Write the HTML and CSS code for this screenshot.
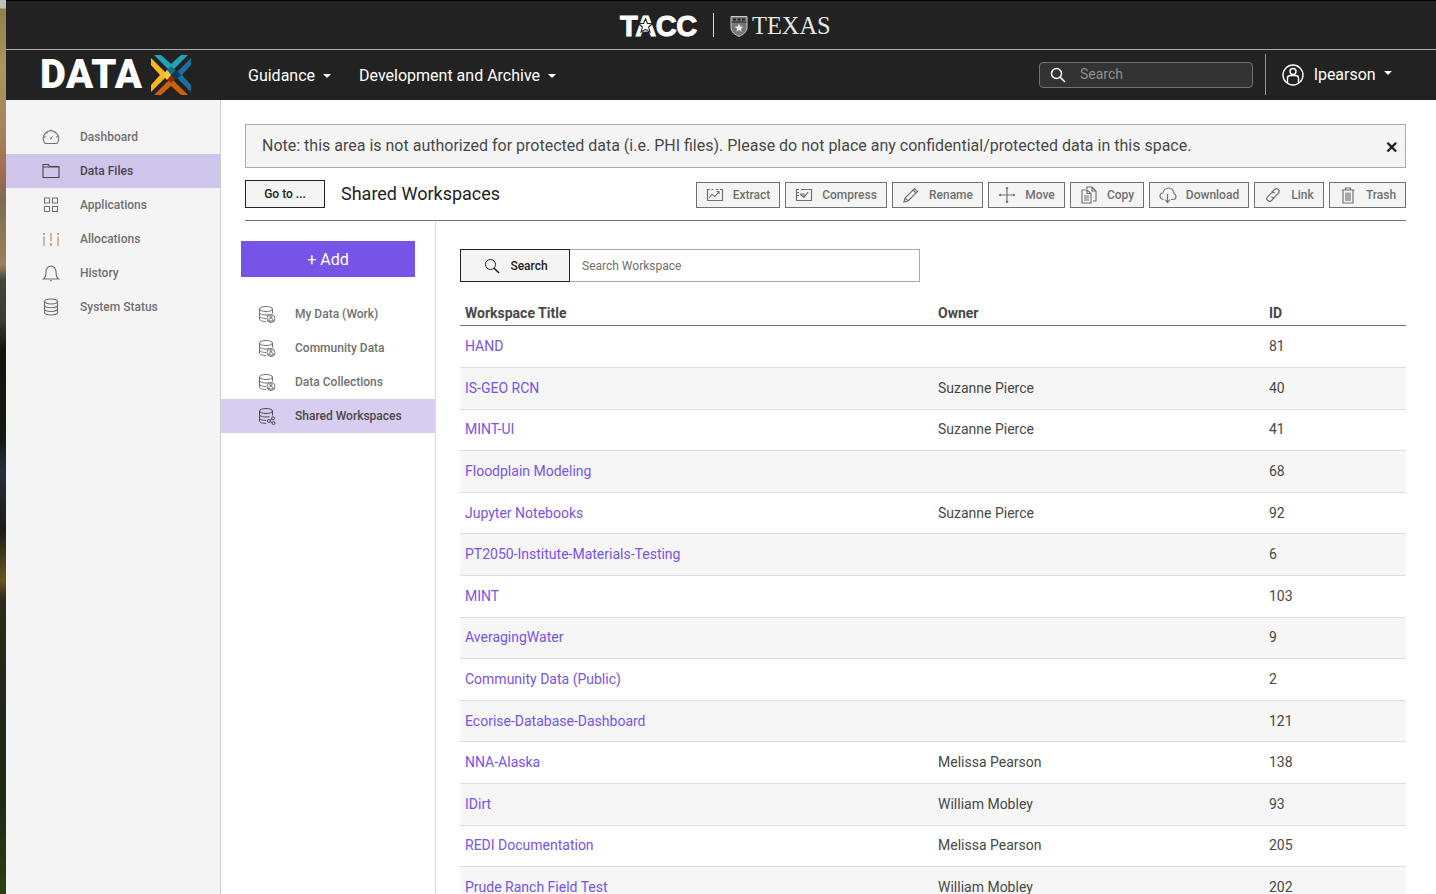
FILE: index.html
```html
<!DOCTYPE html>
<html lang="en">
<head>
    <meta charset="UTF-8">
    <title>Data Files</title>
    <link rel="stylesheet" href="styles.css">
</head>
<body>
    <svg class="sprite" width="0" height="0">
        <symbol id="i-db-user" viewBox="0 0 18 18">
            <path d="M14.500 4v4.500M1.500 4v10c0 1.400 2.900 2.500 6.500 2.500M1.500 7.500C1.500 8.900 4.400 10 8 10c1.200 0 2.500-.1 3.500-.4M1.500 11c0 1.400 2.900 2.500 6.500 2.500"/>
            <ellipse cx="8" cy="4" rx="6.500" ry="2.500"/>
            <circle cx="13" cy="13.500" r="4"/>
            <circle class="fill" cx="13" cy="11.700" r="1.100"/>
            <path class="fill" d="M10.800 16c0-2 1-2.800 2.200-2.800s2.200.8 2.200 2.800z"/>
        </symbol>
        <symbol id="i-db-share" viewBox="0 0 18 18">
            <path d="M14.500 4v4.500M1.500 4v10c0 1.400 2.900 2.500 6.500 2.500M1.500 7.500C1.500 8.900 4.400 10 8 10c1.200 0 2.500-.1 3.500-.4M1.500 11c0 1.400 2.900 2.500 6.500 2.500"/>
            <ellipse cx="8" cy="4" rx="6.500" ry="2.500"/>
            <circle cx="10.800" cy="14" r="1.500"/>
            <circle cx="15" cy="11.300" r="1.500"/>
            <circle cx="15.500" cy="16" r="1.500"/>
            <path d="M12 13.200l1.800-1.200M12.200 14.600l2 .9"/>
        </symbol>
        <symbol id="i-search" viewBox="0 0 16 16">
            <circle cx="6.500" cy="6.500" r="5"/>
            <path d="M10.200 10.200l4.800 4.800" stroke-width="1.600"/>
        </symbol>
    </svg>

    <div class="desktop-strip"></div>

    <div class="app">
        <div class="brand-bar">
            <span class="tacc-logo">T<span class="tacc-a">A<svg class="tacc-star" viewBox="0 0 20 20"><path d="M10 1l2.600 6.200 6.700.5-5.100 4.400 1.600 6.500L10 15.100l-5.800 3.500 1.600-6.500L.7 7.700l6.700-.5z"/></svg></span>CC</span>
            <span class="brand-divider"></span>
            <svg class="ut-shield" viewBox="0 0 18 22">
                <path d="M1 1h16v11c0 4.500-4 7-8 9-4-2-8-4.500-8-9z" fill="#777" stroke="#ccc"/>
                <path d="M1.500 6.500h15" stroke="#222" stroke-width="1"/>
                <path d="M3 3h3v2H3zM7.500 3h3v2h-3zM12 3h3v2h-3z" fill="#222"/>
                <path d="M9 8l1.200 3 3.100.2-2.400 2 .8 3.100L9 14.600l-2.700 1.700.8-3.100-2.400-2 3.100-.2z" fill="#eee"/>
            </svg>
            <span class="texas-logo">TEXAS</span>
        </div>

        <nav class="main-nav">
            <a class="data-logo">
                <span class="data-word">DATA</span>
                <svg class="data-x" viewBox="0 0 40 40">
                    <polygon points="3,0 10,0 20,9 30,0 37,0 20,17" fill="#22a3b5"/>
                    <polygon points="0,3 17,20 0,37 0,30 9,20 0,10" fill="#f7b71d"/>
                    <polygon points="3,40 20,23 37,40 30,40 20,31 10,40" fill="#c9600a"/>
                    <polygon points="40,3 40,10 31,20 40,30 40,37 23,20" fill="#1b6f98"/>
                    <polygon points="20,11 25,16 20,21 15,16" fill="#14707f"/>
                    <polygon points="25,15 30,20 25,25 20,20" fill="#0d3a60"/>
                    <polygon points="20,20 24,24 20,28 16,24" fill="#8e2a08"/>
                    <polygon points="16,15 20,20 16,25 12,20" fill="#fbc842"/>
                </svg>
            </a>
            <a class="nav-link caret">Guidance</a>
            <a class="nav-link caret">Development and Archive</a>
            <div class="nav-right">
                <label class="nav-search">
                    <svg class="icon nav-search-icon"><use href="#i-search"/></svg>
                    <span class="nav-search-text">Search</span>
                </label>
                <div class="nav-user caret">
                    <svg class="user-icon" viewBox="0 0 22 22">
                        <circle cx="11" cy="11" r="10"/>
                        <circle cx="11" cy="7.500" r="3"/>
                        <path d="M5.500 18.500V14c0-1.500 1.500-2.500 3-2.500h5c1.500 0 3 1 3 2.500v4.500"/>
                    </svg>
                    <span class="user-name">lpearson</span>
                </div>
            </div>
        </nav>

        <div class="content-wrap">
            <aside class="sidebar">
                <a class="side-item">
                    <svg class="icon side-icon" viewBox="0 0 18 18"><path d="M3 15.500A7.800 7.800 0 1 1 15 15.500zM9 1.500v2M2 9h2M14 9h2M4 4l1.400 1.400M14 4l-1.400 1.400"/><path d="M7.500 10.500l4-3-2.500 4z" class="fill"/></svg>
                    Dashboard
                </a>
                <a class="side-item active">
                    <svg class="icon side-icon" viewBox="0 0 18 18"><path d="M1 15.500V2.500h5.500l1 2H17v11zM1 5h16"/></svg>
                    Data Files
                </a>
                <a class="side-item">
                    <svg class="icon side-icon" viewBox="0 0 18 18"><path d="M2.500 2h5v5h-5zM10.500 2h5v5h-5zM2.500 10.500h5v5h-5zM10.500 10.500h5v5h-5z"/></svg>
                    Applications
                </a>
                <a class="side-item">
                    <svg class="icon side-icon" viewBox="0 0 18 18"><path d="M2 6.500V16" stroke="#b8814f"/><path d="M2 3v2"/><path d="M9 3v8" stroke="#b8814f"/><path d="M9 13v3"/><path d="M16 6.500V16" stroke="#b8814f"/><path d="M16 3v2"/></svg>
                    Allocations
                </a>
                <a class="side-item">
                    <svg class="icon side-icon" viewBox="0 0 18 18"><path d="M1.500 15c2-1.500 2.500-3.500 2.500-7 0-3 2-6 5-6s5 3 5 6c0 3.500.5 5.500 2.500 7zM8 16.800h2"/></svg>
                    History
                </a>
                <a class="side-item">
                    <svg class="icon side-icon" viewBox="0 0 18 18"><ellipse cx="9" cy="3.500" rx="6.500" ry="2.500"/><path d="M2.500 3.500v11c0 1.400 2.900 2.500 6.500 2.500s6.500-1.100 6.500-2.500v-11M2.500 7.200c0 1.400 2.900 2.500 6.500 2.500s6.500-1.100 6.500-2.500M2.500 11c0 1.400 2.900 2.500 6.500 2.500s6.500-1.100 6.500-2.500"/></svg>
                    System Status
                </a>
            </aside>

            <main class="main">
                <div class="note">
                    <span>Note: this area is not authorized for protected data (i.e. PHI files). Please do not place any confidential/protected data in this space.</span>
                    <span class="note-close">&#x2715;</span>
                </div>

                <div class="toolbar">
                    <button class="goto-btn">Go to ...</button>
                    <h1 class="page-title">Shared Workspaces</h1>
                    <div class="actions">
                        <button class="action-btn w-extract">
                            <svg class="icon" viewBox="0 0 18 18"><path d="M4 3.500H1.500v11h15v-11H14M5.500 3.500h2M10 3.500h2.500M1.500 7v1M3 12l3-3.500 3 2 4-5M10.500 5.500H13V8"/></svg>
                            Extract
                        </button>
                        <button class="action-btn w-compress">
                            <svg class="icon" viewBox="0 0 18 18"><path d="M4 3.500H1.500v11h15v-11H6M1.500 6.500H4M1.500 9.500H4M5 8l4 3.500L13 6M5.500 8H9M9 11.500V8"/></svg>
                            Compress
                        </button>
                        <button class="action-btn w-rename">
                            <svg class="icon" viewBox="0 0 18 18"><path d="M2 16l1-4L12.500 2.500l3 3L6 15zM3 12l3 3M11 4l3 3"/></svg>
                            Rename
                        </button>
                        <button class="action-btn w-move">
                            <svg class="icon" viewBox="0 0 18 18"><path d="M9 1v16M1 9h16"/><path class="fill" d="M9 .5l1.500 2.500h-3zM9 17.500L7.500 15h3zM.5 9L3 7.500v3zM17.500 9L15 10.500v-3z"/></svg>
                            Move
                        </button>
                        <button class="action-btn w-copy">
                            <svg class="icon" viewBox="0 0 18 18"><path d="M7 3V1h5l4 4v10h-3M12 1v4h4M2 4h5l4 3.500V17H2zM7 4v3.500h4M4 10h5M4 12h5M4 14h5"/></svg>
                            Copy
                        </button>
                        <button class="action-btn w-download">
                            <svg class="icon" viewBox="0 0 18 18"><path d="M4.500 13.500C2.500 13 1 11.500 1 10c0-1.800 1.300-3 3-3 .5-3 3-5 5.500-5 3 0 5.500 2.500 5.500 5.500 1.200.5 2 1.500 2 3 0 2-1.500 3-3.500 3H12M8.500 8v8M6 13.500l2.500 3 2.500-3"/></svg>
                            Download
                        </button>
                        <button class="action-btn w-link">
                            <svg class="icon" viewBox="0 0 18 18"><path d="M7.500 6.500l3-3c1-1 2.800-1 3.800 0s1 2.800 0 3.800l-3.500 3.500c-1 1-2.600 1-3.600 0M10.500 11.500l-3 3c-1 1-2.800 1-3.800 0s-1-2.800 0-3.800l3.500-3.500c1-1 2.600-1 3.600 0"/></svg>
                            Link
                        </button>
                        <button class="action-btn w-trash">
                            <svg class="icon" viewBox="0 0 18 18"><path d="M2.500 4h13M6.500 4V2h5v2M4 4v13h10V4M7 6.500V15M9 6.500V15M11 6.500V15"/></svg>
                            Trash
                        </button>
                    </div>
                </div>

                <div class="files-area">
                    <div class="files-nav">
                        <button class="add-btn">+ Add</button>
                        <ul class="system-list">
                            <li class="system-item"><svg class="icon db-icon"><use href="#i-db-user"/></svg>My Data (Work)</li>
                            <li class="system-item"><svg class="icon db-icon"><use href="#i-db-user"/></svg>Community Data</li>
                            <li class="system-item"><svg class="icon db-icon"><use href="#i-db-user"/></svg>Data Collections</li>
                            <li class="system-item active"><svg class="icon db-icon"><use href="#i-db-share"/></svg>Shared Workspaces</li>
                        </ul>
                    </div>

                    <div class="listing">
                        <div class="search-row">
                            <button class="search-btn">
                                <svg class="icon"><use href="#i-search"/></svg>
                                Search
                            </button>
                            <input class="search-input" type="text" placeholder="Search Workspace">
                        </div>

                        <div class="ws-table">
                            <div class="ws-row ws-head"><span>Workspace Title</span><span>Owner</span><span>ID</span></div>
                            <div class="ws-row"><a>HAND</a><span></span><span>81</span></div>
                            <div class="ws-row"><a>IS-GEO RCN</a><span>Suzanne Pierce</span><span>40</span></div>
                            <div class="ws-row"><a>MINT-UI</a><span>Suzanne Pierce</span><span>41</span></div>
                            <div class="ws-row"><a>Floodplain Modeling</a><span></span><span>68</span></div>
                            <div class="ws-row"><a>Jupyter Notebooks</a><span>Suzanne Pierce</span><span>92</span></div>
                            <div class="ws-row"><a>PT2050-Institute-Materials-Testing</a><span></span><span>6</span></div>
                            <div class="ws-row"><a>MINT</a><span></span><span>103</span></div>
                            <div class="ws-row"><a>AveragingWater</a><span></span><span>9</span></div>
                            <div class="ws-row"><a>Community Data (Public)</a><span></span><span>2</span></div>
                            <div class="ws-row"><a>Ecorise-Database-Dashboard</a><span></span><span>121</span></div>
                            <div class="ws-row"><a>NNA-Alaska</a><span>Melissa Pearson</span><span>138</span></div>
                            <div class="ws-row"><a>IDirt</a><span>William Mobley</span><span>93</span></div>
                            <div class="ws-row"><a>REDI Documentation</a><span>Melissa Pearson</span><span>205</span></div>
                            <div class="ws-row"><a>Prude Ranch Field Test</a><span>William Mobley</span><span>202</span></div>
                        </div>
                    </div>
                </div>
            </main>
        </div>
    </div>
</body>
</html>
```

FILE: styles.css
```css
html, body {
    height: 100%;
    margin: 0;
    overflow: hidden;
}
body {
    display: flex;
    font-family: Roboto, 'Liberation Sans', sans-serif;
    color: #484848;
    background-color: #fff;
}
.sprite {
    position: absolute;
}
.icon {
    width: 16px;
    height: 16px;
    flex: none;
    fill: none;
    stroke: currentColor;
    stroke-width: 1;
}
.icon .fill {
    fill: currentColor;
    stroke: none;
}

/* Sliver of the desktop behind the window */
.desktop-strip {
    width: 6px;
    flex: none;
    background: linear-gradient(to bottom, #c4c0b8 0, #c4c0b8 8px, #93804e 9px, #ab9560 70px, #a8845a 130px, #a06c50 175px, #7d6a50 200px, #9a8258 265px, #44463c 280px, #3c3c30 320px, #14140c 350px, #141a14 440px, #283040 470px, #1c1c14 530px, #6a5520 580px, #2e2a18 600px, #22281a 700px, #1e2a14 800px, #2e4010 894px);
}
.app {
    flex: 1;
    min-width: 0;
    display: flex;
    flex-direction: column;
}

/* Top bars */
.brand-bar {
    height: 50px;
    flex: none;
    box-sizing: border-box;
    border-top: 1px solid #000;
    border-bottom: 1px solid #aaa;
    background-color: #222;
    color: #fff;
    display: flex;
    align-items: center;
    padding-left: 614px;
}
.tacc-logo {
    font-family: 'Liberation Sans', sans-serif;
    font-weight: 700;
    font-size: 29px;
    letter-spacing: -.4px;
    -webkit-text-stroke: 1px #fff;
    width: 79px;
    margin-top: 2px;
}
.tacc-a {
    position: relative;
}
.tacc-star {
    position: absolute;
    left: 3px;
    top: 8px;
    width: 15px;
    height: 15px;
    fill: #fff;
    stroke: #222;
    stroke-width: 1.5;
}
.brand-divider {
    width: 1px;
    height: 24px;
    background-color: #ddd;
    margin: 0 16px 0 14px;
}
.ut-shield {
    width: 18px;
    height: 23px;
    margin: 2px 4px 0 0;
}
.texas-logo {
    font-family: 'Liberation Serif', serif;
    font-size: 24.400px;
    color: #e8e8e8;
    margin-top: 2px;
}
.main-nav {
    height: 50px;
    flex: none;
    background-color: #222;
    color: #fff;
    display: flex;
    align-items: center;
}
.data-logo {
    display: flex;
    align-items: center;
    margin-left: 34px;
    width: 208px;
}
.data-word {
    font-weight: 900;
    font-size: 40px;
    letter-spacing: .5px;
    line-height: 50px;
}
.data-x {
    width: 40px;
    height: 40px;
    margin-left: 8px;
}
.nav-link {
    font-size: 16px;
    margin-right: 28px;
}
.caret::after {
    content: "";
    display: inline-block;
    margin-left: 8px;
    vertical-align: 3px;
    border-top: 4px solid #fff;
    border-left: 4px solid transparent;
    border-right: 4px solid transparent;
}
.nav-right {
    margin-left: auto;
    display: flex;
    align-items: center;
    height: 41px;
    margin-top: -1px;
}
.nav-search {
    width: 214px;
    height: 26px;
    box-sizing: border-box;
    border: 1px solid #707070;
    border-radius: 4px;
    background-color: #333;
    display: flex;
    align-items: center;
    font-size: 14px;
    color: #8f8f8f;
    margin: 1px 12px 0 0;
}
.nav-search-text {
    margin-bottom: 2px;
}
.nav-search-icon {
    color: #fff;
    stroke-width: 1.500;
    margin: 0 14px 0 10px;
}
.nav-user {
    height: 41px;
    box-sizing: border-box;
    width: 171px;
    border-left: 1px solid #999;
    padding-left: 16px;
    display: flex;
    align-items: center;
    font-size: 16px;
}
.nav-user::after {
    margin-top: -3px;
}
.user-name {
    margin-bottom: 1px;
}
.user-icon {
    width: 22px;
    height: 22px;
    margin: 1px 10px 0 0;
    fill: none;
    stroke: #fff;
    stroke-width: 1.400;
}

/* Portal sidebar */
.content-wrap {
    flex: 1;
    min-height: 0;
    display: flex;
}
.sidebar {
    width: 215px;
    flex: none;
    box-sizing: border-box;
    background-color: #f4f4f4;
    border-right: 1px solid #ccc;
    padding-top: 20px;
}
.side-item {
    height: 34px;
    display: flex;
    align-items: center;
    font-size: 12px;
    font-weight: 500;
    color: #707070;
    padding-left: 36px;
}
.side-icon {
    width: 18px;
    height: 18px;
    stroke-width: 1.100;
    margin-right: 20px;
}
.side-item.active {
    background-color: #cfc5ea;
    color: #484848;
}

/* Main area */
.main {
    flex: 1;
    min-width: 0;
    padding: 24px 30px 0 24px;
    display: flex;
    flex-direction: column;
}
.note {
    height: 44px;
    flex: none;
    box-sizing: border-box;
    border: 1px solid #aaa;
    background-color: #f4f4f4;
    font-size: 16px;
    padding: 11px 16px 0;
    display: flex;
    justify-content: space-between;
}
.note-close {
    font-size: 16px;
    font-weight: 700;
    color: #222;
    margin: 2px -9px 0 0;
}
.toolbar {
    height: 53px;
    flex: none;
    box-sizing: border-box;
    display: flex;
    align-items: flex-start;
    border-bottom: 1px solid #707070;
    padding-top: 12px;
}
.goto-btn {
    width: 80px;
    height: 28px;
    border: 1px solid #222;
    background-color: #f4f4f4;
    font: 500 12px Roboto, sans-serif;
    color: #222;
    padding: 0;
}
.page-title {
    margin: 0 0 0 16px;
    font-size: 18px;
    font-weight: 400;
    line-height: 28px;
    color: #222;
}
.actions {
    margin-left: auto;
    display: flex;
    gap: 5px;
    padding-top: 2px;
}
.action-btn {
    height: 26px;
    box-sizing: border-box;
    border: 1px solid #707070;
    background-color: #f4f4f4;
    font: 500 12px Roboto, sans-serif;
    color: #707070;
    display: flex;
    align-items: center;
    justify-content: center;
    gap: 9px;
    padding: 0;
}
.action-btn .icon {
    width: 18px;
    height: 18px;
    stroke-width: 1.150;
}
.w-extract { width: 84px; }
.w-compress { width: 102px; }
.w-rename { width: 91px; }
.w-move { width: 77px; }
.w-copy { width: 74px; }
.w-download { width: 100px; }
.w-link { width: 70px; }
.w-trash { width: 77px; }

/* Files area */
.files-area {
    flex: 1;
    min-height: 0;
    display: flex;
    margin-left: -24px;
}
.files-nav {
    width: 215px;
    flex: none;
    box-sizing: border-box;
    border-right: 1px solid #ddd;
    padding-top: 20px;
}
.add-btn {
    display: block;
    width: 174px;
    height: 36px;
    margin-left: 20px;
    border: none;
    background-color: #7754e8;
    color: #fff;
    font: 400 16px Roboto, sans-serif;
    padding: 0;
}
.system-list {
    list-style: none;
    margin: 20px 0 0;
    padding: 0;
}
.system-item {
    height: 34px;
    display: flex;
    align-items: center;
    font-size: 12px;
    font-weight: 500;
    color: #707070;
    padding-left: 37px;
}
.db-icon {
    width: 18px;
    height: 18px;
    margin-right: 19px;
}
.system-item.active {
    background-color: #d6cdf0;
    color: #484848;
}
.listing {
    flex: 1;
    min-width: 0;
    padding: 28px 0 0 24px;
}
.search-row {
    display: flex;
    height: 33px;
}
.search-btn {
    width: 110px;
    box-sizing: border-box;
    border: 1px solid #222;
    background-color: #f4f4f4;
    font: 500 12px Roboto, sans-serif;
    color: #222;
    display: flex;
    align-items: center;
    justify-content: center;
    gap: 10px;
    padding: 0 0 0 2px;
}
.search-input {
    width: 350px;
    box-sizing: border-box;
    border: 1px solid #aaa;
    border-left: none;
    font: 400 12px Roboto, sans-serif;
    padding: 0 12px;
    background-color: #fff;
}
.search-input::placeholder {
    color: #707070;
}
.ws-table {
    margin-top: 20px;
}
.ws-row {
    display: grid;
    grid-template-columns: 473px 331px 142px;
    align-items: center;
    height: 41.600px;
    box-sizing: border-box;
    border-bottom: 1px solid #ddd;
    padding-bottom: .8px;
    font-size: 14px;
}
.ws-row > * {
    padding-left: 5px;
}
.ws-row:nth-child(odd) {
    background-color: #f6f6f6;
}
.ws-row a {
    color: #7754e8;
}
.ws-row.ws-head {
    height: 24.400px;
    border-bottom: 1px solid #707070;
    font-weight: 700;
    align-items: end;
    padding-bottom: 4px;
    background-color: transparent;
}
```
